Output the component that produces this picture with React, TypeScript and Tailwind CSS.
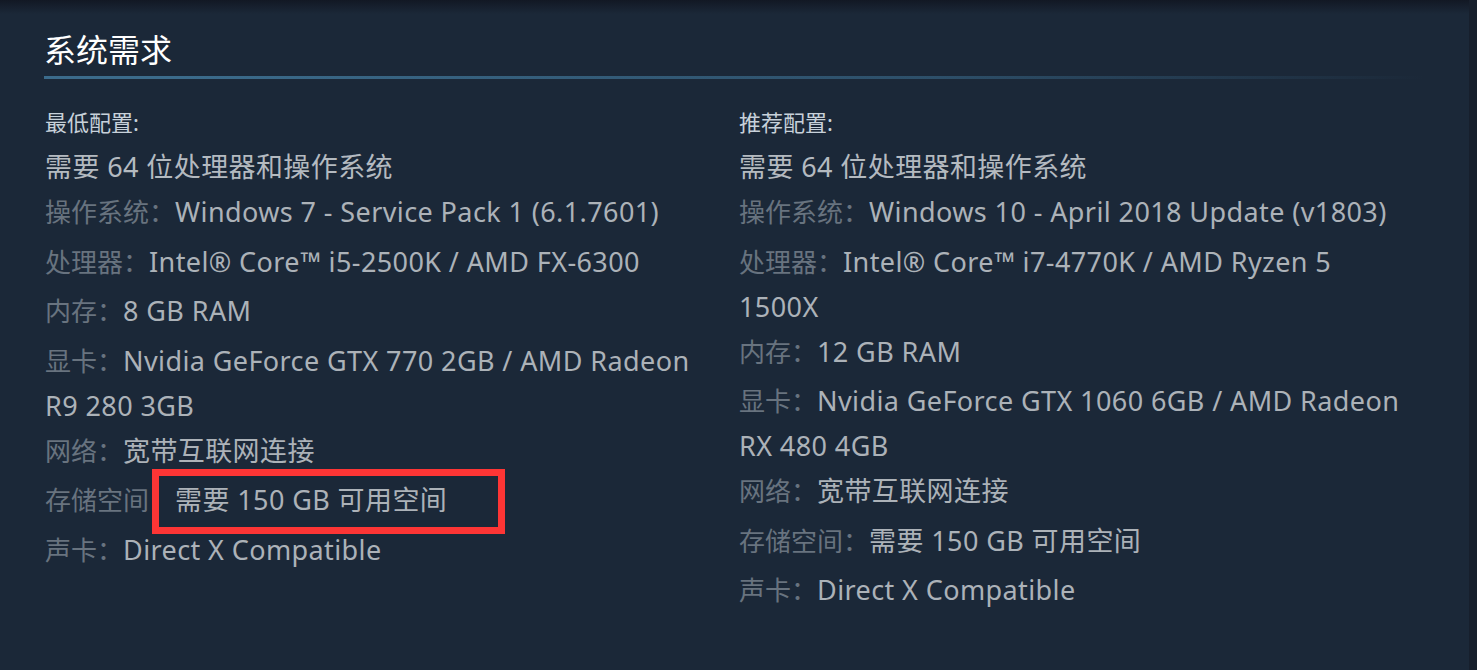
interface ReqRow {
  label: string;
  value: string;
  highlight?: boolean;
}

interface ReqColumn {
  title: string;
  note: string;
  rows: ReqRow[];
}

const columns: ReqColumn[] = [
  {
    title: "最低配置:",
    note: "需要 64 位处理器和操作系统",
    rows: [
      { label: "操作系统：", value: "Windows 7 - Service Pack 1 (6.1.7601)" },
      { label: "处理器：", value: "Intel® Core™ i5-2500K / AMD FX-6300" },
      { label: "内存：", value: "8 GB RAM" },
      { label: "显卡：", value: "Nvidia GeForce GTX 770 2GB / AMD Radeon R9 280 3GB" },
      { label: "网络：", value: "宽带互联网连接" },
      { label: "存储空间：", value: "需要 150 GB 可用空间", highlight: true },
      { label: "声卡：", value: "Direct X Compatible" },
    ],
  },
  {
    title: "推荐配置:",
    note: "需要 64 位处理器和操作系统",
    rows: [
      { label: "操作系统：", value: "Windows 10 - April 2018 Update (v1803)" },
      { label: "处理器：", value: "Intel® Core™ i7-4770K / AMD Ryzen 5 1500X" },
      { label: "内存：", value: "12 GB RAM" },
      { label: "显卡：", value: "Nvidia GeForce GTX 1060 6GB / AMD Radeon RX 480 4GB" },
      { label: "网络：", value: "宽带互联网连接" },
      { label: "存储空间：", value: "需要 150 GB 可用空间" },
      { label: "声卡：", value: "Direct X Compatible" },
    ],
  },
];

function RequirementColumn({ col }: { col: ReqColumn }) {
  return (
    <div>
      <p className="text-[22px] leading-[30px] text-[#c7d1da]">{col.title}</p>
      <ul className="mt-[7px]">
        <li className="text-[27px] leading-[45px] tracking-[0.4px] text-[#b4bac0]">{col.note}</li>
        {col.rows.map((row) => (
          <li
            key={row.label}
            className="relative min-h-[49.5px] text-[27px] leading-[45px] tracking-[0.4px] text-[#acb2b8]"
          >
            <span className="text-[26px] leading-none tracking-normal text-[#68737f]">{row.label}</span>
            {row.value}
            {/* red annotation box over the storage value */}
            {row.highlight && (
              <div className="absolute -top-[8px] left-[107px] w-[353px] h-[65px] border-[7px] border-[#fd3535]" />
            )}
          </li>
        ))}
      </ul>
    </div>
  );
}

export default function App() {
  return (
    <div className="flex min-h-screen bg-[#1b2838] bg-[linear-gradient(to_bottom,#121824_0px,#1b2838_14px)] font-['Noto_Sans','Noto_Sans_CJK_SC',sans-serif]">
      <div className="flex-1 pl-[44px] pt-[30px]">
        {/* Section header */}
        <h2 className="text-[32px] leading-[40px] text-white">系统需求</h2>
        <div className="mt-[6px] w-[1380px] h-[3px] bg-[linear-gradient(to_right,#3b6b8b_0%,#3b6b8b_10%,#2d4f69_65%,rgba(27,40,56,0)_100%)]" />

        {/* Two requirement columns */}
        <div className="mt-[28px] pl-px grid grid-cols-[660px_666px] gap-[34px]">
          {columns.map((col) => (
            <RequirementColumn key={col.title} col={col} />
          ))}
        </div>
      </div>
      <div className="w-[8px] bg-[#171f2c]" />
    </div>
  );
}
